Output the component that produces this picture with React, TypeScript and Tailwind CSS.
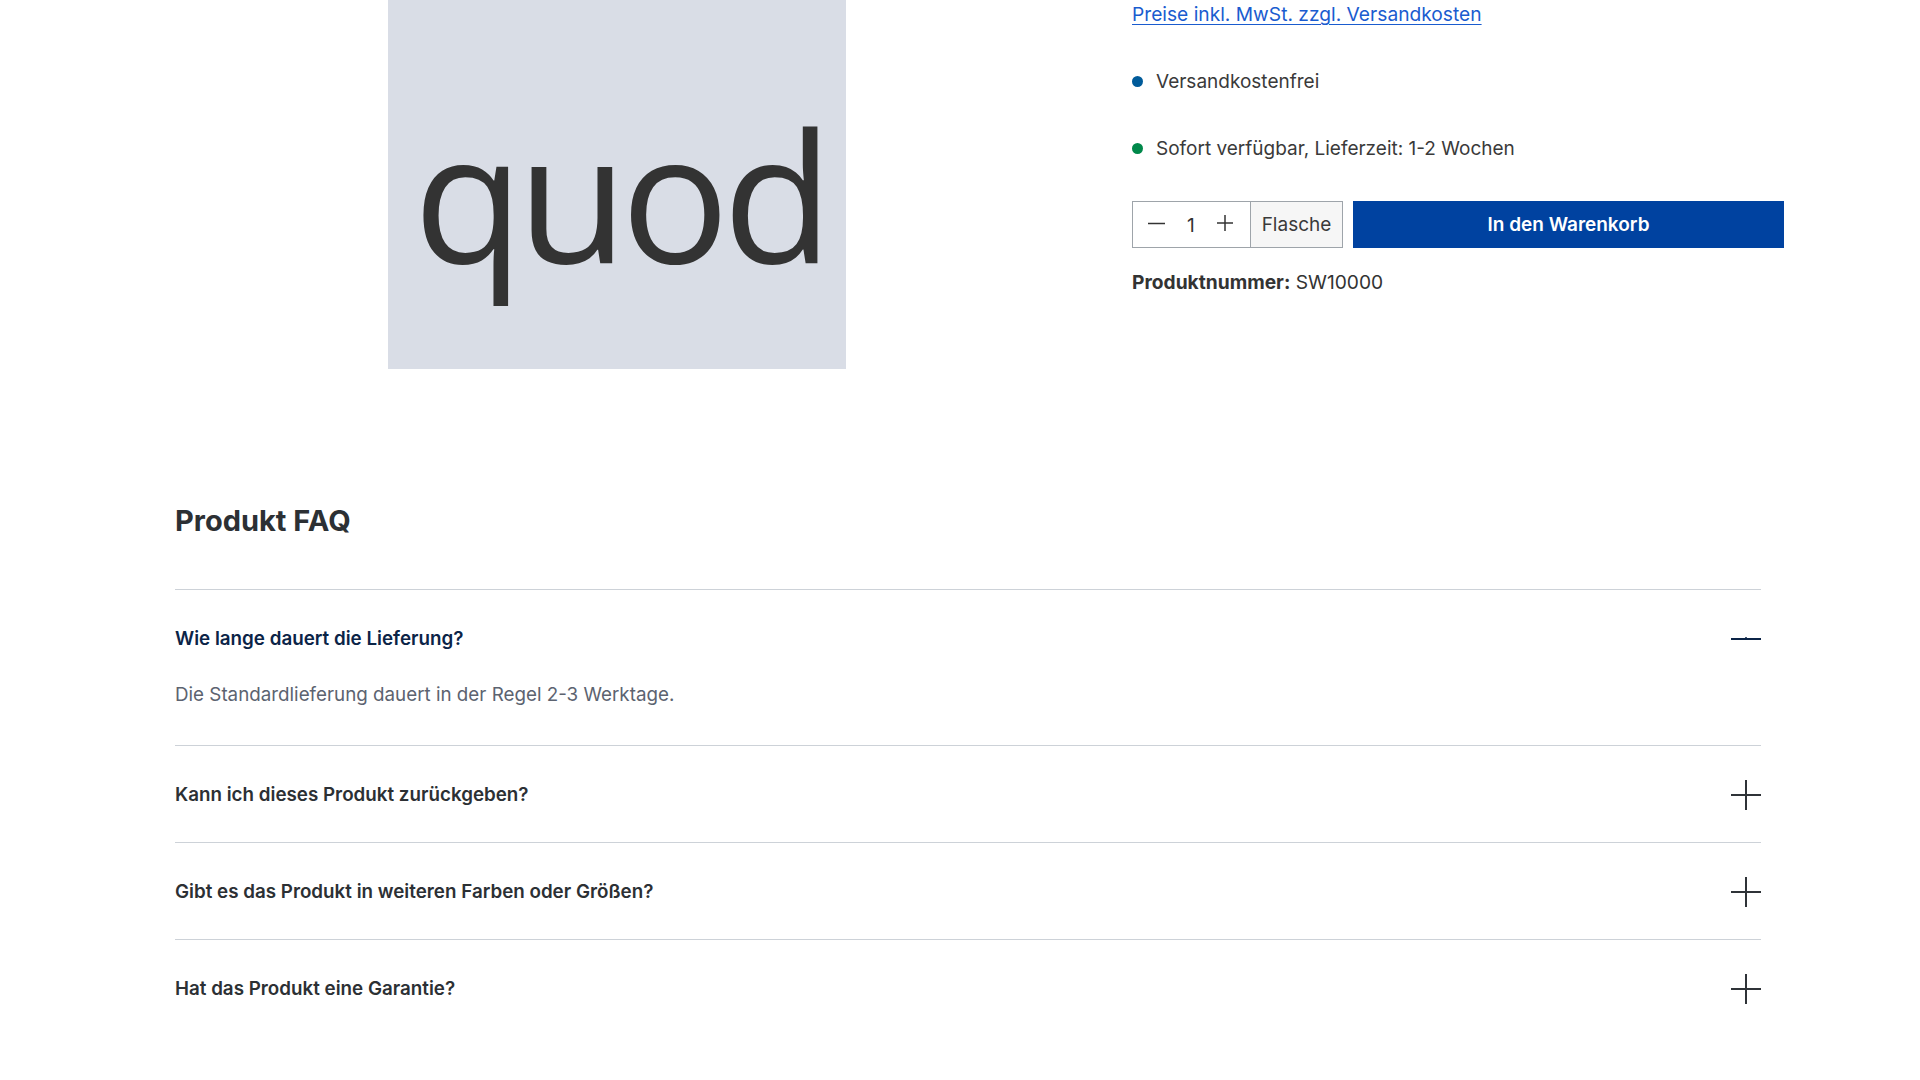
import React from "react";

type Faq = { q: string; a?: string; open?: boolean };

const faqs: Faq[] = [
  {
    q: "Wie lange dauert die Lieferung?",
    a: "Die Standardlieferung dauert in der Regel 2-3 Werktage.",
    open: true,
  },
  { q: "Kann ich dieses Produkt zurückgeben?" },
  { q: "Gibt es das Produkt in weiteren Farben oder Größen?" },
  { q: "Hat das Produkt eine Garantie?" },
];

function PlusIcon() {
  return (
    <svg width="30" height="30" viewBox="0 0 30 30" className="shrink-0">
      <line x1="0" y1="15" x2="30" y2="15" stroke="#2f3338" strokeWidth="2" />
      <line x1="15" y1="0" x2="15" y2="30" stroke="#2f3338" strokeWidth="2" />
    </svg>
  );
}

function MinusIcon() {
  return (
    <svg width="30" height="30" viewBox="0 0 30 30" className="shrink-0">
      <line x1="0" y1="15" x2="30" y2="15" stroke="#0b2447" strokeWidth="2" />
      <line x1="15" y1="13" x2="15" y2="15" stroke="#0b2447" strokeWidth="1.5" />
    </svg>
  );
}

function FaqItem({ item }: { item: Faq }) {
  return (
    <div className={`border-t border-[#cdd2d8] pt-[35px] ${item.open ? "pb-[37px]" : "pb-[34px]"}`}>
      <div className="flex items-center justify-between h-[27px]">
        <span
          className={`text-[18.8px] leading-[27px] font-semibold ${
            item.open ? "text-[#0b2447]" : "text-[#2c3034]"
          }`}
        >
          {item.q}
        </span>
        {item.open ? <MinusIcon /> : <PlusIcon />}
      </div>
      {item.open && item.a && (
        <p className="mt-[29px] text-[18.8px] leading-[27px] text-[#5c6370]">{item.a}</p>
      )}
    </div>
  );
}

export default function App() {
  return (
    <div className="min-h-screen bg-white font-['Inter','Noto_Sans',sans-serif] text-[#333]">
      <div className="pl-[175px] pr-[159px]">
        {/* Product detail row: gallery + buy box */}
        <div className="flex -mr-[23px]">
          <div className="w-[884px] shrink-0 flex justify-center">
            <div className="w-[458px] h-[369px] bg-[#d9dde6] flex justify-center">
              <span className="mt-[104px] pl-[6px] font-['Open_Sans',sans-serif] text-[180px] leading-none tracking-[-6.5px] text-[#333333]">
                quod
              </span>
            </div>
          </div>

          <div className="ml-[73px] w-[652px] shrink-0 pt-[1px]">
            <a
              href="#"
              className="text-[19.2px] leading-[27px] text-[#1a5ccf] underline underline-offset-[3px] decoration-1"
            >
              Preise inkl. MwSt. zzgl. Versandkosten
            </a>

            <div className="mt-[40px] flex items-center h-[27px]">
              <span className="w-[11px] h-[11px] rounded-full bg-[#005b9a] mr-[13px]" />
              <span className="text-[19px] leading-[27px] text-[#3a3a3a]">Versandkostenfrei</span>
            </div>

            <div className="mt-[40px] flex items-center h-[27px]">
              <span className="w-[11px] h-[11px] rounded-full bg-[#00884a] mr-[13px]" />
              <span className="text-[19px] leading-[27px] text-[#3a3a3a]">
                Sofort verfügbar, Lieferzeit: 1-2 Wochen
              </span>
            </div>

            <div className="mt-[39px] flex h-[47px]">
              <div className="flex border border-[#9ea4aa] w-[211px]">
                <div className="w-[117px] flex items-center bg-white">
                  <svg width="17" height="17" viewBox="0 0 17 17" className="ml-[15px]">
                    <line x1="0" y1="7.5" x2="17" y2="7.5" stroke="#333" strokeWidth="1.5" />
                  </svg>
                  <span className="ml-[22px] text-[19px] text-[#333] leading-none pt-[2px]">1</span>
                  <svg width="16" height="16" viewBox="0 0 16 16" className="ml-[22px] -mt-[4px]">
                    <line x1="0" y1="8" x2="16" y2="8" stroke="#333" strokeWidth="1.5" />
                    <line x1="8" y1="0" x2="8" y2="16" stroke="#333" strokeWidth="1.5" />
                  </svg>
                </div>
                <div className="flex-1 border-l border-[#9ea4aa] bg-[#f6f6f6] flex items-center justify-center text-[19px] text-[#3a3a3a] pt-[2px]">
                  Flasche
                </div>
              </div>
              <button className="ml-[10px] flex-1 bg-[#0042a0] text-white text-[19px] font-semibold flex items-center justify-center pt-[2px]">
                In den Warenkorb
              </button>
            </div>

            <div className="mt-[21px] text-[19.2px] leading-[27px] text-[#333]">
              <span className="font-bold">Produktnummer:</span> SW10000
            </div>
          </div>
        </div>

        {/* FAQ */}
        <div className="mt-[134px]">
          <h2 className="text-[29px] leading-[36px] font-bold text-[#2c3034]">Produkt FAQ</h2>
          <div className="mt-[50px]">
            {faqs.map((f) => (
              <FaqItem key={f.q} item={f} />
            ))}
          </div>
        </div>
      </div>
    </div>
  );
}
